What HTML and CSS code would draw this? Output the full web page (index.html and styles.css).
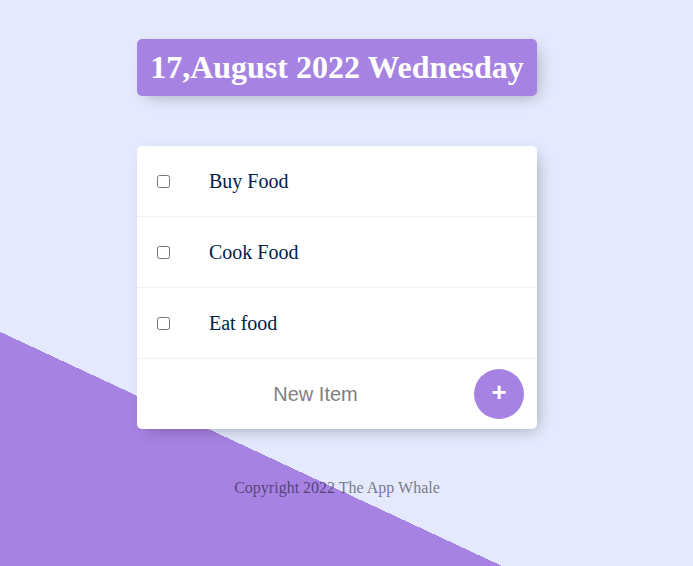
FILE: index.html
```html
<!DOCTYPE html>
<html lang="en">
<head>
<meta charset="utf-8">
<title>To-Do List</title>
<link rel="stylesheet" href="styles.css">
</head>
<body>
<div class="page">
  <div class="box heading">
    <h1 class="title">17,August 2022 Wednesday</h1>
  </div>
  <div class="box list">
    <div class="item">
      <input class="check" type="checkbox">
      <p class="label">Buy Food</p>
    </div>
    <div class="item">
      <input class="check" type="checkbox">
      <p class="label">Cook Food</p>
    </div>
    <div class="item">
      <input class="check" type="checkbox">
      <p class="label">Eat food</p>
    </div>
    <form class="item add-form">
      <input class="new-item" type="text" placeholder="New Item" autocomplete="off">
      <button class="add-btn" type="button">+</button>
    </form>
  </div>
  <footer class="footer">Copyright 2022 The App Whale</footer>
</div>
</body>
</html>
```

FILE: styles.css
```css
html {
  height: 100%;
  background-color: #E4E9FD;
  background-image: linear-gradient(25deg, #A683E3 212.2px, #E4E9FD 212.2px);
}

body {
  margin: 0;
  height: 100%;
  overflow: hidden;
  font-family: "Liberation Serif", "Times New Roman", serif;
}

.page {
  display: flex;
  flex-direction: column;
  align-items: center;
  padding: 39px 19px 0 0;
}

.box {
  width: 400px;
  background: #fff;
  border-radius: 5px;
  box-shadow: 5px 5px 15px -5px rgba(0, 0, 0, 0.3);
}

.heading {
  background-color: #A683E3;
  text-align: center;
}

.title {
  margin: 0;
  padding: 10px;
  color: #fff;
  font-size: 32px;
  line-height: 37px;
  font-weight: bold;
}

.list {
  margin-top: 50px;
}

.item {
  min-height: 70px;
  display: flex;
  align-items: center;
  border-bottom: 1px solid #F1F1F1;
}

.item:last-child {
  border-bottom: 0;
}

.check {
  width: 13px;
  height: 13px;
  margin: 0 20px;
}

.label {
  margin: 0;
  padding: 20px 20px 20px 19px;
  font-size: 20px;
  line-height: 23px;
  color: #00204a;
}

.add-form {
  margin: 0;
  padding-left: 20px;
}

.new-item {
  box-sizing: border-box;
  width: 317px;
  height: 60px;
  padding: 1px 2px;
  border: none;
  text-align: center;
  font-family: "Liberation Sans", Arial, sans-serif;
  font-size: 20px;
  background: transparent;
}

.new-item::placeholder {
  color: grey;
  opacity: 1;
}

.add-btn {
  width: 50px;
  height: 50px;
  padding: 0 0 5px;
  border: 0;
  border-radius: 50%;
  background-color: #A683E3;
  color: #fff;
  font-family: "Liberation Sans", Arial, sans-serif;
  font-size: 26px;
  font-weight: bold;
  line-height: 30px;
}

.footer {
  margin-top: 50px;
  color: rgba(0, 0, 0, 0.5);
  font-size: 16px;
  line-height: 18px;
  text-align: center;
}
```
